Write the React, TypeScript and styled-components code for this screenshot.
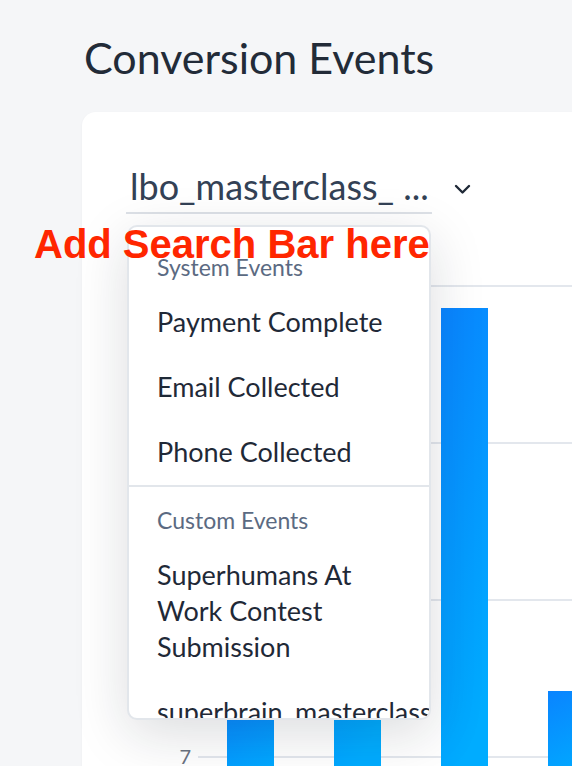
import styled, { createGlobalStyle } from "styled-components";

const GlobalStyle = createGlobalStyle`
    html, body {
        margin: 0;
        padding: 0;
        background: #f5f6f8;
        font-family: Lato, "Noto Sans", sans-serif;
    }
`;

const systemEvents = ['Payment Complete', 'Email Collected', 'Phone Collected'];
const customEvents = ['Superhumans At Work Contest Submission', 'superbrain_masterclass'];

// chart coordinates are relative to the card's left edge
const bars = [
    { x: 145, top: 470 },
    { x: 252, top: 200 },
    { x: 359, top: 78 },
    { x: 466, top: 461 },
];
const gridLines = [56, 213, 370, 527];

const App = () => {
    return (
        <Page>
            <GlobalStyle />
            <Title>Conversion Events</Title>

            <Card>
                <SelectRow>
                    <SelectField>lbo_masterclass_ ...</SelectField>
                    <svg width="17" height="11" viewBox="0 0 17 11" fill="none">
                        <path d="M2 2L8.5 8.5L15 2" stroke="#1f2937" strokeWidth="2.4" strokeLinecap="round" strokeLinejoin="round" />
                    </svg>
                </SelectRow>

                <svg width="540" height="560" viewBox="0 0 540 560" style={{ display: 'block', marginTop: 16 }}>
                    <defs>
                        <linearGradient id="barFill" x1="0" y1="0" x2="0.25" y2="1">
                            <stop offset="0" stopColor="#0a84ff" />
                            <stop offset="1" stopColor="#00acff" />
                        </linearGradient>
                    </defs>
                    {gridLines.map((y) => (
                        <line key={y} x1="116" x2="540" y1={y} y2={y} stroke="#e3e7ed" strokeWidth="2" />
                    ))}
                    <text x="109" y="534" textAnchor="end" fontSize="20" fill="#6b7280" fontFamily="Lato, sans-serif">7</text>
                    {bars.map((b) => (
                        <rect key={b.x} x={b.x} y={b.top} width="47" height={560 - b.top} fill="url(#barFill)" />
                    ))}
                </svg>

                <Dropdown>
                    <Group>
                        <GroupLabel>System Events</GroupLabel>
                        {systemEvents.map((name) => (
                            <Item key={name}>{name}</Item>
                        ))}
                    </Group>
                    <Group $divided>
                        <GroupLabel>Custom Events</GroupLabel>
                        {customEvents.map((name) => (
                            <Item key={name}>{name}</Item>
                        ))}
                    </Group>
                </Dropdown>
            </Card>

            <Annotation>Add Search Bar here</Annotation>
        </Page>
    );
};

const Page = styled.div`
    position: relative;
    height: 766px;
    overflow: hidden;
    padding: 32px 0 0 82px;
    box-sizing: border-box;
`;

const Title = styled.h1`
    margin: 0;
    padding-left: 2px;
    font-size: 43px;
    line-height: 52px;
    font-weight: 400;
    color: #222b38;
`;

const Card = styled.div`
    position: relative;
    margin-top: 28px;
    width: 560px;
    height: 760px;
    background: #ffffff;
    border-radius: 14px;
    box-shadow: 0 1px 3px rgba(15, 23, 42, 0.04);
    padding-top: 52px;
    box-sizing: border-box;
`;

const SelectRow = styled.div`
    display: flex;
    align-items: center;
    gap: 22px;
    padding-left: 44px;
`;

const SelectField = styled.div`
    width: 306px;
    box-sizing: border-box;
    padding: 0 0 4px 4px;
    border-bottom: 2px solid #dde1e7;
    font-size: 36px;
    line-height: 44px;
    color: #334155;
    white-space: nowrap;
`;

const Dropdown = styled.div`
    position: absolute;
    left: 45px;
    top: 113px;
    width: 304px;
    height: 495px;
    box-sizing: border-box;
    overflow: hidden;
    background: #ffffff;
    border: 2px solid #e2e6eb;
    border-radius: 10px;
    box-shadow: 0 14px 54px rgba(17, 24, 39, 0.15);
    padding-top: 25px;
`;

const Group = styled.div<{ $divided?: boolean }>`
    border-top: ${(p) => (p.$divided ? '2px solid #e2e6eb' : 'none')};
    padding-top: ${(p) => (p.$divided ? '18px' : '0')};
`;

const GroupLabel = styled.div`
    padding: 0 28px;
    margin-bottom: 8px;
    font-size: 23px;
    line-height: 30px;
    color: #5b6a82;
`;

const Item = styled.div`
    padding: 14px 28px 15px;
    font-size: 27px;
    line-height: 36px;
    color: #1f2937;
    white-space: normal;
`;

const Annotation = styled.div`
    position: absolute;
    left: 34px;
    top: 224px;
    font-family: "Liberation Sans", Arial, sans-serif;
    font-weight: 700;
    font-size: 40px;
    line-height: 40px;
    color: #ff2600;
    white-space: nowrap;
`;

export default App;
